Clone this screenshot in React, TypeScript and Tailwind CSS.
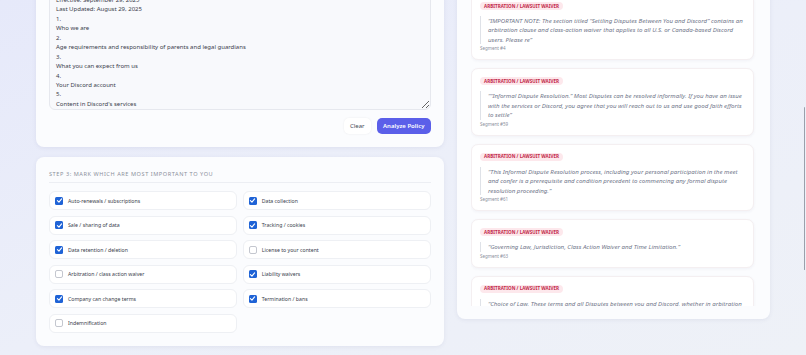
import React from "react";

const textLines = [
  "Discord Terms of Service",
  "",
  "Effective: September 29, 2025",
  "Last Updated: August 29, 2025",
  "1.",
  "Who we are",
  "2.",
  "Age requirements and responsibility of parents and legal guardians",
  "3.",
  "What you can expect from us",
  "4.",
  "Your Discord account",
  "5.",
  "Content in Discord's services",
  "6.",
  "Your content",
  "7.",
  "Discord's content",
];

const options: { label: string; checked: boolean }[] = [
  { label: "Auto-renewals / subscriptions", checked: true },
  { label: "Data collection", checked: true },
  { label: "Sale / sharing of data", checked: true },
  { label: "Tracking / cookies", checked: true },
  { label: "Data retention / deletion", checked: true },
  { label: "License to your content", checked: false },
  { label: "Arbitration / class action waiver", checked: false },
  { label: "Liability waivers", checked: true },
  { label: "Company can change terms", checked: true },
  { label: "Termination / bans", checked: true },
  { label: "Indemnification", checked: false },
];

const findings = [
  {
    quote:
      "\u201CIMPORTANT NOTE: The section titled \u201CSettling Disputes Between You and Discord\u201D contains an arbitration clause and class-action waiver that applies to all U.S. or Canada-based Discord users. Please re\u201D",
    seg: "Segment #4",
  },
  {
    quote:
      "\u201C\u201CInformal Dispute Resolution.\u201D Most Disputes can be resolved informally. If you have an issue with the services or Discord, you agree that you will reach out to us and use good faith efforts to settle\u201D",
    seg: "Segment #59",
  },
  {
    quote:
      "\u201CThis Informal Dispute Resolution process, including your personal participation in the meet and confer is a prerequisite and condition precedent to commencing any formal dispute resolution proceeding.\u201D",
    seg: "Segment #61",
  },
  {
    quote: "\u201CGoverning Law, Jurisdiction, Class Action Waiver and Time Limitation.\u201D",
    seg: "Segment #63",
  },
  {
    quote:
      "\u201CChoice of Law. These terms and all Disputes between you and Discord, whether in arbitration or in court, will be governed by the laws of the State of California.\u201D",
    seg: "Segment #64",
  },
];

function Box({ checked }: { checked: boolean }) {
  if (checked) {
    return (
      <span className="flex h-[8px] w-[8px] shrink-0 items-center justify-center rounded-[1.5px] bg-[#1f63d6]">
        <svg viewBox="0 0 10 10" className="h-[7px] w-[7px]">
          <path d="M2 5.2 L4.2 7.2 L8 2.8" fill="none" stroke="white" strokeWidth="1.6" strokeLinecap="round" strokeLinejoin="round" />
        </svg>
      </span>
    );
  }
  return <span className="h-[8px] w-[8px] shrink-0 rounded-[2px] border border-[#c4c7cf] bg-white" />;
}

export default function App() {
  return (
    <div
      className="relative h-[355px] w-full overflow-hidden bg-gradient-to-br from-[#e6e9fa] via-[#eceff9] to-[#eef1f7]"
      style={{ fontFamily: '"Noto Sans", "Open Sans", sans-serif' }}
    >
      <div className="grid grid-cols-[408px_313px] items-start gap-[13px] px-[36px]">
        {/* Left column */}
        <div className="-mt-[44px] flex flex-col gap-[10px]">
          <div className="rounded-[8px] bg-[#fbfcfe] p-[13px] shadow-[0_1px_4px_rgba(60,70,120,0.08)]">
            <textarea
              readOnly
              value={textLines.join("\n")}
              className="block h-[141px] w-full resize-y overflow-hidden rounded-[6px] border border-[#e6e8ee] bg-[#f8f9fc] px-[6px] pt-[7px] text-[6px] leading-[9.45px] text-[#3a404c] outline-none"
            />
            <div className="mt-[8px] flex justify-end gap-[6px]">
              <button className="h-[16px] rounded-[5px] bg-white px-[6px] text-[6px] leading-[16px] text-[#444a56] shadow-[0_0_2px_rgba(0,0,0,0.08)]">
                Clear
              </button>
              <button className="h-[16px] rounded-[5px] bg-[#5b5fe9] px-[6.5px] text-[6px] font-semibold leading-[16px] text-white">
                Analyze Policy
              </button>
            </div>
          </div>

          <div className="rounded-[8px] bg-[#fbfcfe] px-[13px] pb-[13px] pt-[13px] shadow-[0_1px_4px_rgba(60,70,120,0.08)]">
            <div className="border-b border-[#eceef3] pb-[3.5px] text-[5.6px] uppercase leading-[8.4px] tracking-[0.55px] text-[#8b909c]">
              Step 3: Mark which are most important to you
            </div>
            <div className="mt-[8.5px] grid grid-cols-2 gap-x-[5.5px] gap-y-[5.5px]">
              {options.map((o) => (
                <div
                  key={o.label}
                  className="flex h-[19px] items-center gap-[5px] rounded-[6px] border border-[#eef0f4] bg-white px-[5px]"
                >
                  <Box checked={o.checked} />
                  <span className="text-[5.2px] leading-[8px] text-[#3a404c]">{o.label}</span>
                </div>
              ))}
            </div>
          </div>
        </div>

        {/* Right column */}
        <div className="-mt-[44px] rounded-[8px] bg-[#fbfcfe] px-[14px] pb-[13px] pt-[14px] shadow-[0_1px_4px_rgba(60,70,120,0.08)]">
          <div className="h-[15px] text-[7px] font-semibold leading-[15px] text-[#2d3340]">Flagged clauses</div>
          <div className="mt-[8px] h-[313px] overflow-hidden">
            <div className="flex w-[283px] flex-col gap-[8px]">
              {findings.map((f) => (
                <div
                  key={f.seg}
                  className="flex flex-col items-start rounded-[7px] border border-[#f4eff1] bg-white px-[8px] pb-[7px] pt-[8px] shadow-[0_1px_3px_rgba(60,70,120,0.06)]"
                >
                  <span className="block rounded-full bg-[#fde8ec] px-[4px] py-[1.5px] text-[4.6px] font-bold uppercase leading-[5px] text-[#c2274a]">
                    Arbitration / Lawsuit waiver
                  </span>
                  <div className="mt-[6px] w-full border-l-[1.5px] border-[#dfe2e8] pl-[7px] text-[6.15px] italic leading-[9.45px] text-[#70768a]">
                    {f.quote}
                  </div>
                  <div className="mt-[1px] text-[4.5px] leading-[7px] text-[#8b909c]">{f.seg}</div>
                </div>
              ))}
            </div>
          </div>
        </div>
      </div>

      {/* page scrollbar thumb */}
      <div className="absolute right-[1px] top-[107px] h-[163px] w-[1.5px] rounded bg-[#9aa0ab]" />
    </div>
  );
}
